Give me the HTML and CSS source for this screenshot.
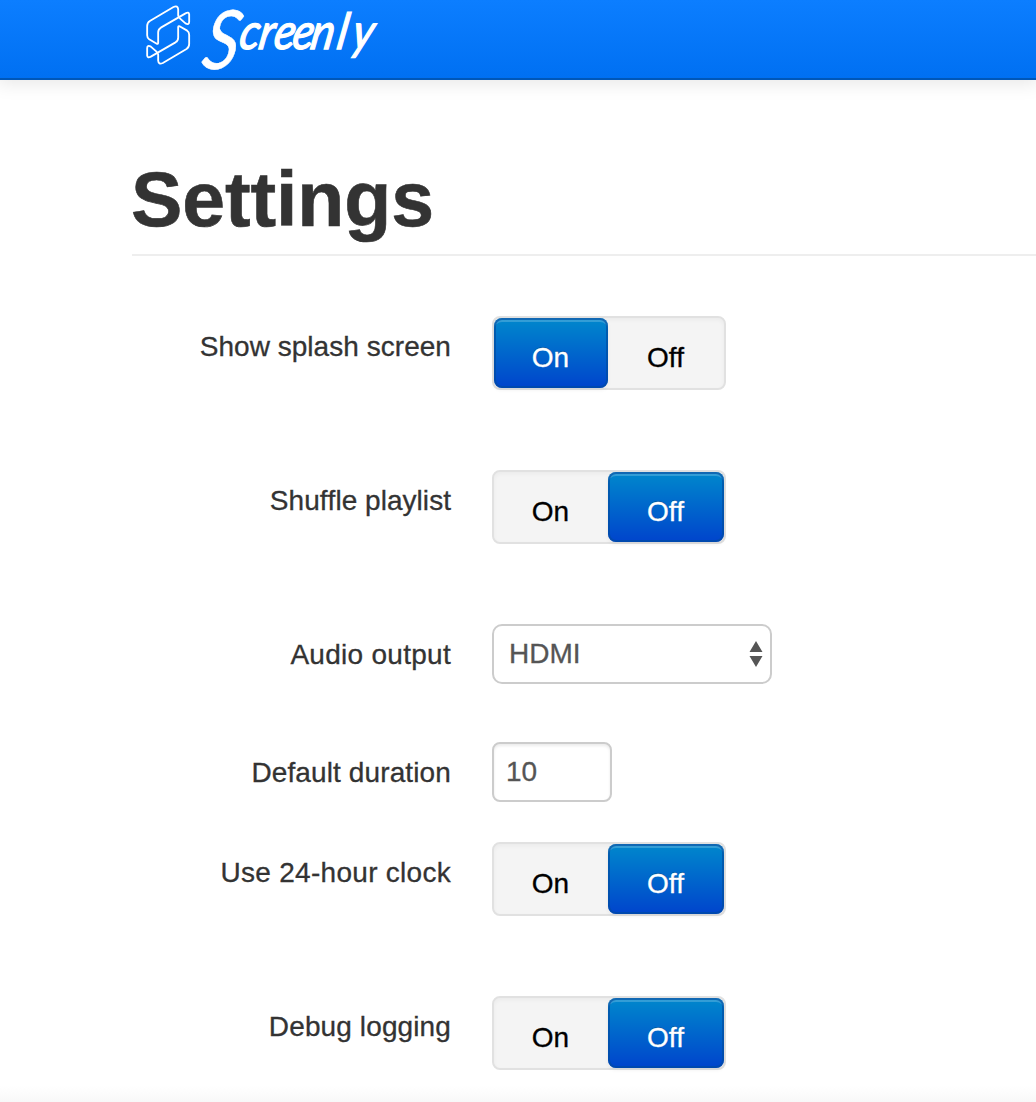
FILE: index.html
```html
<!DOCTYPE html>
<html lang="en">
<head>
<meta charset="utf-8">
<title>Settings</title>
<link rel="stylesheet" href="styles.css">
</head>
<body>
<header class="navbar">
  <svg class="brand" width="260" height="78" viewBox="0 0 260 78" role="img" aria-label="Screenly">
    <g class="mark" transform="translate(-3.5 0) scale(.33333)">
      <path d="M77 132L53 118Q47 114 47 106V78Q47 68 55 63L126 21Q139 15 140 28V46Q140 52 145 55L162 70Q173 76 173 65V43Q172 35 162 40L88 83Q80 88 80 97V128Q80 133 76 131" transform="translate(3 0)"/>
      <path d="M143 78L167 92Q173 96 173 104V132Q173 142 165 147L94 189Q81 195 80 182V164Q80 158 75 155L58 140Q47 134 47 145V167Q48 175 58 170L132 127Q140 122 140 113V82Q140 77 144 79" transform="translate(3 0)"/>
    </g>
    <text class="cap" transform="translate(66 69) skewX(-10) scale(.86 1)">S</text>
    <text class="word" transform="translate(0 49) skewX(-10) scale(.88 1)" x="118 140 157 178 199 229 246">creenly</text>
  </svg>
</header>
<main class="page">
  <h1 class="title">Settings</h1>
  <form class="form">
    <div class="row switch-row"><span class="label tight">Show splash screen</span><div class="switch"><span class="option active">On</span><span class="option">Off</span></div></div>
    <div class="row switch-row"><span class="label tight">Shuffle playlist</span><div class="switch"><span class="option">On</span><span class="option active">Off</span></div></div>
    <div class="row select-row"><span class="label loose">Audio output</span><div class="field select"><span>HDMI</span><svg width="14" height="28" viewBox="0 0 14 28"><path d="M7 1L13.5 12H.5ZM7 27L13.5 16H.5Z"/></svg></div></div>
    <div class="row input-row"><span class="label">Default duration</span><div class="field input">10</div></div>
    <div class="row switch-row"><span class="label loose">Use 24-hour clock</span><div class="switch"><span class="option">On</span><span class="option active">Off</span></div></div>
    <div class="row"><span class="label">Debug logging</span><div class="switch"><span class="option">On</span><span class="option active">Off</span></div></div>
  </form>
</main>
<div class="footer-shade"></div>
</body>
</html>
```
FILE: styles.css
```css
* { box-sizing: border-box; }
body {
  margin: 0;
  height: 1102px;
  overflow: hidden;
  display: flex;
  flex-direction: column;
  background: #fff;
  color: #333;
  font: 28px/40px "Liberation Sans", Arial, sans-serif;
}
.navbar {
  height: 80px;
  flex: none;
  padding-left: 134px;
  background: linear-gradient(#0c7eff, #0070f2);
  border-bottom: 2px solid #0057b8;
  box-shadow: 0 0 18px 3px rgba(0, 0, 0, .1);
}
.brand { display: block; overflow: visible; }
.mark { fill: none; stroke: #fff; stroke-width: 5.5; stroke-linejoin: round; }
.word, .cap {
  fill: #fff;
  stroke: #fff;
  font-family: Lato, sans-serif;
  font-style: italic;
}
.word { font-size: 50px; stroke-width: 1.4; }
.cap { font-size: 82px; stroke-width: .5; }
.page { flex: 1; padding: 80px 0 0 132px; }
.title {
  margin: 0;
  height: 96px;
  border-bottom: 2px solid #eee;
  font-size: 77px;
  line-height: 78px;
  text-indent: -1px;
  letter-spacing: -.1px;
  -webkit-text-stroke: .6px #333;
}
.form { padding-top: 60px; }
.row { display: grid; grid-template-columns: 319px 280px; column-gap: 41px; align-items: start; }
.switch-row { height: 154px; }
.select-row { height: 118px; }
.input-row { height: 100px; }
.label {
  padding-top: 11px;
  text-align: right;
  white-space: nowrap;
  letter-spacing: .12px;
  font-kerning: none;
  -webkit-text-stroke: .3px currentColor;
}
.tight { letter-spacing: .04px; }
.loose { letter-spacing: .28px; }
.switch {
  width: 234px;
  height: 74px;
  display: grid;
  grid-template-columns: 114px 116px;
  border: 2px solid #e1e1e1;
  border-radius: 8px;
  background: #f4f4f4;
  box-shadow: inset 0 2px 4px rgba(0, 0, 0, .04);
  color: #000;
}
.option {
  height: 70px;
  padding: 20px 1px 0 0;
  text-align: center;
  border-radius: 8px;
  -webkit-text-stroke: .3px currentColor;
}
.active {
  color: #fff;
  background: linear-gradient(#08c, #04c);
  box-shadow: inset 0 0 0 2px rgba(0, 76, 160, .65), inset 0 4px 0 rgba(255, 255, 255, .2), 0 2px 4px rgba(0, 0, 0, .06);
  text-shadow: 0 -1px 0 rgba(0, 0, 0, .25);
}
.field {
  height: 60px;
  border: 2px solid #ccc;
  border-radius: 8px;
  color: #555;
  line-height: 56px;
  -webkit-text-stroke: .3px currentColor;
}
.select { display: flex; align-items: center; justify-content: space-between; padding: 0 7px 0 15px; border-radius: 10px; }
.select svg { fill: #555; }
.input { width: 120px; padding-left: 12px; box-shadow: inset 0 2px 3px rgba(0, 0, 0, .08); }
.footer-shade { height: 16px; flex: none; background: linear-gradient(#fff, #f8f8f8); }
```
